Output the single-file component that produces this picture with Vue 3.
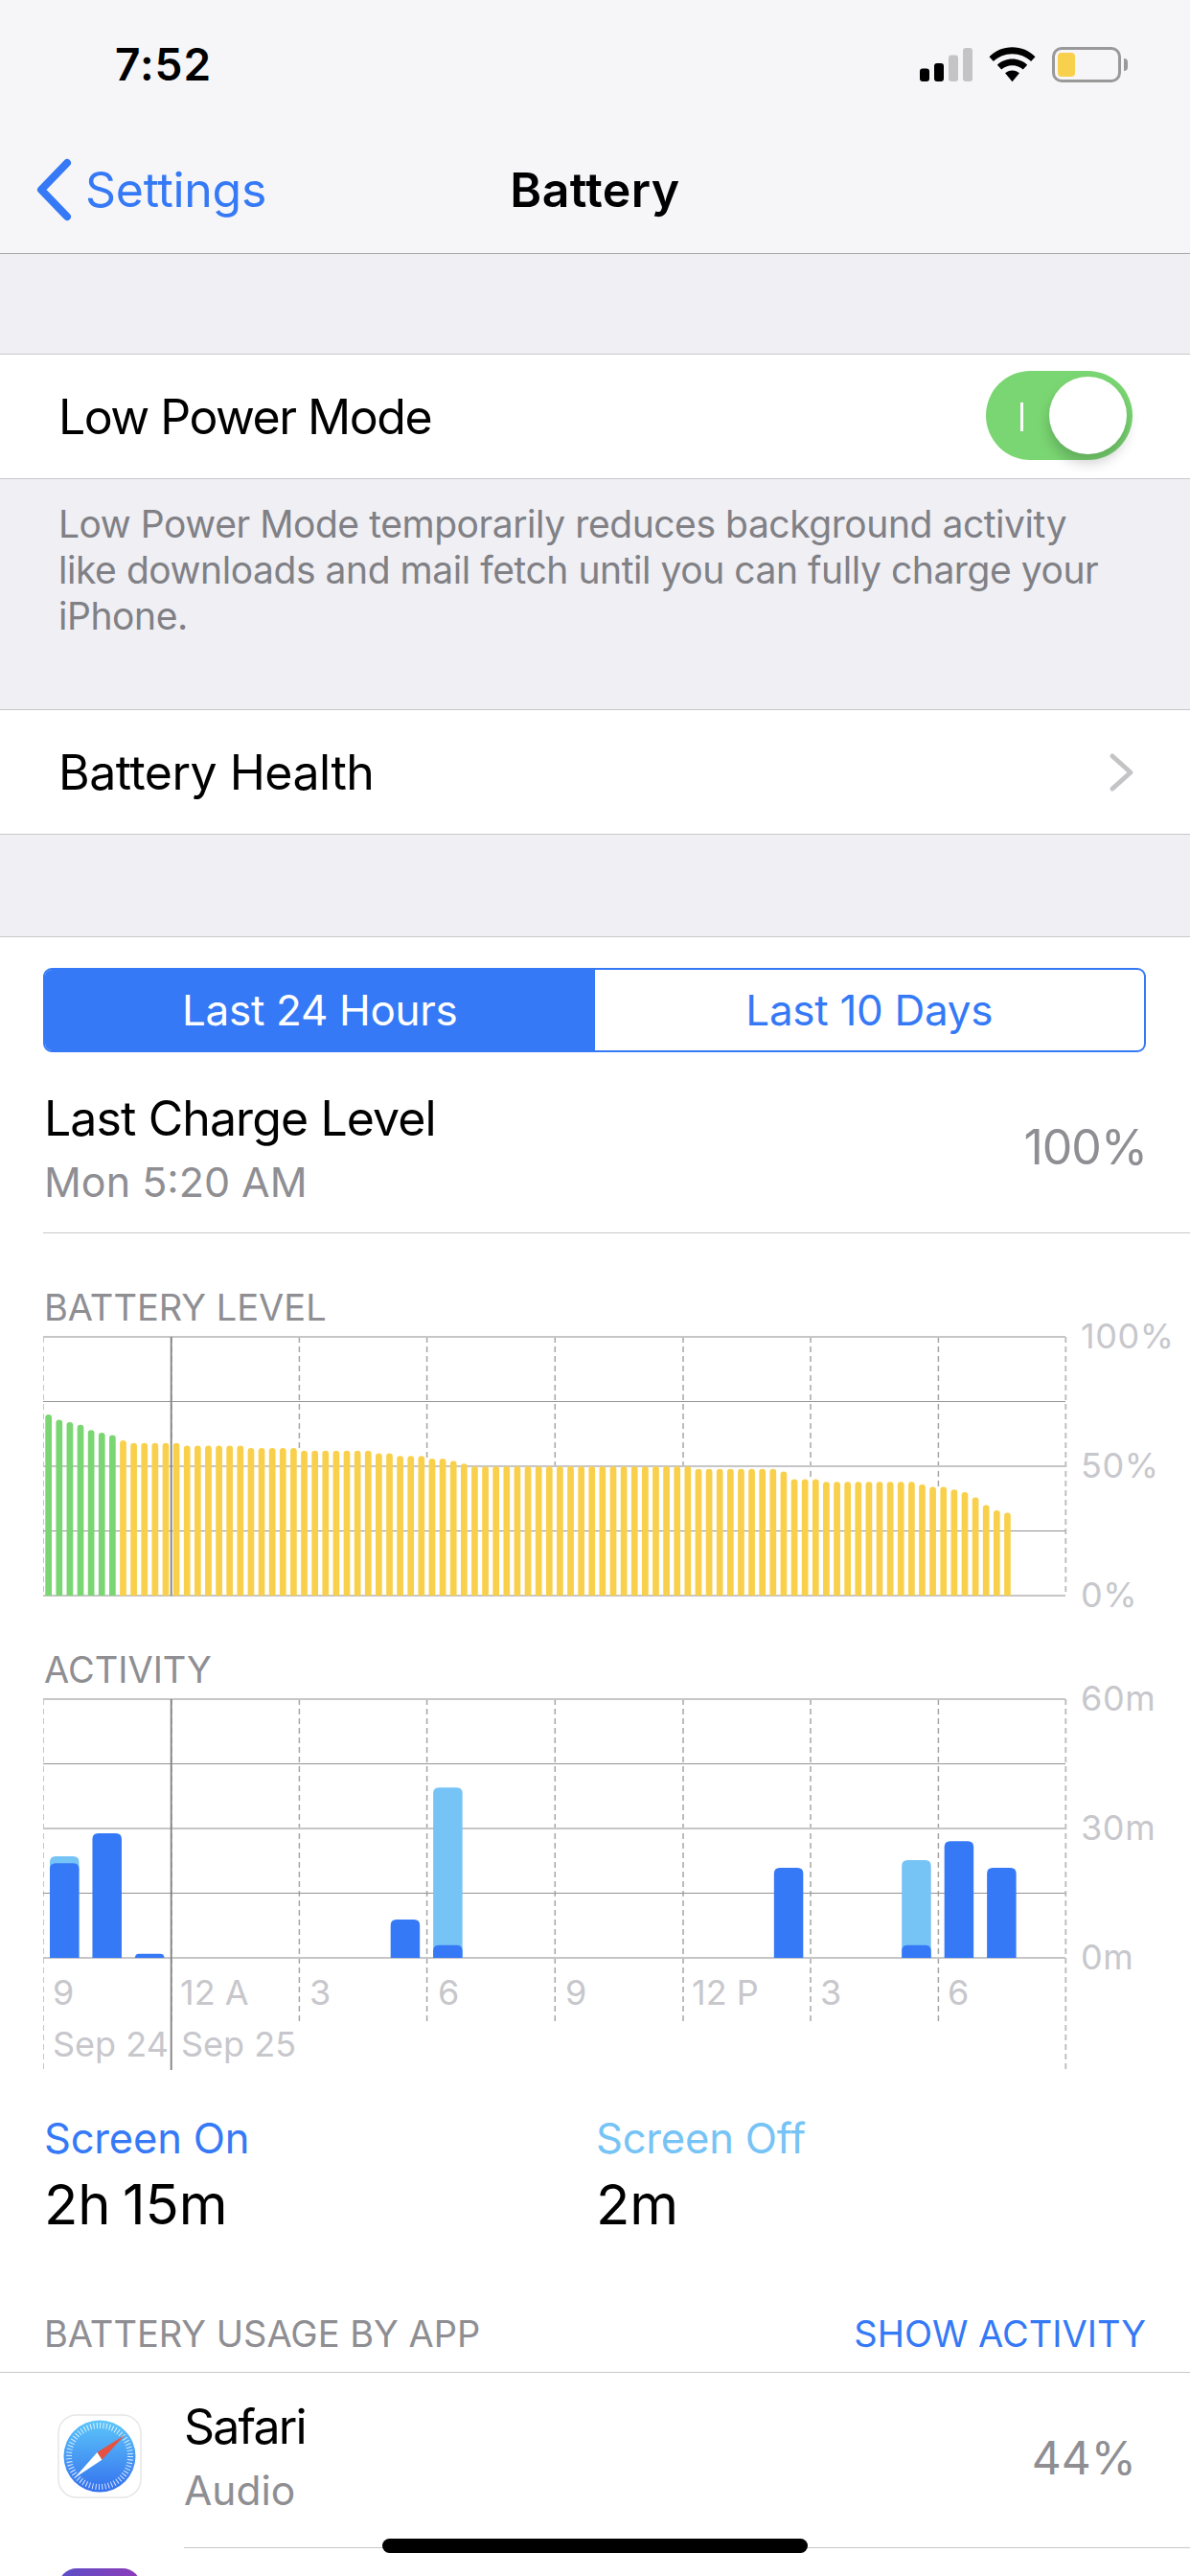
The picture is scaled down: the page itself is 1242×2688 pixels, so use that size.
<template>
  <div class="phone">
    <header class="top">
      <div class="status">
        <span class="time">7:52</span>
        <div class="status-icons">
          <svg class="signal" width="55" height="35" viewBox="0 0 55 35">
            <rect x="0" y="21.500" width="10" height="13.500" rx="3" fill="#000" />
            <rect x="15" y="16" width="10" height="19" rx="3" fill="#000" />
            <rect x="30" y="7.500" width="10" height="27.500" rx="3" fill="#c4c4c4" />
            <rect x="45" y="0" width="10" height="35" rx="3" fill="#c4c4c4" />
          </svg>
          <svg class="wifi" width="49" height="37" viewBox="0 0 50 37">
            <path d="M25 0C15.500 0 7 3.800 0.500 10L5 15C10.300 10 17.300 7 25 7S39.700 10 45 15L49.500 10C43 3.800 34.500 0 25 0Z" fill="#000" />
            <path d="M25 12.500C18.800 12.500 13.200 14.900 9 18.800L13.500 23.700C16.500 20.900 20.500 19.200 25 19.200S33.500 20.900 36.500 23.700L41 18.800C36.800 14.900 31.200 12.500 25 12.500Z" fill="#000" />
            <path d="M25 24.500C22 24.500 19.400 25.600 17.400 27.400L25 36.500L32.600 27.400C30.600 25.600 28 24.500 25 24.500Z" fill="#000" />
          </svg>
          <div class="battery">
            <div class="battery-body"><div class="battery-fill"></div></div>
            <div class="battery-nub"></div>
          </div>
        </div>
      </div>
      <nav class="nav">
        <a class="back">
          <svg width="38" height="66" viewBox="0 0 38 66">
            <path d="M33 5L6 33L33 61" fill="none" stroke="#3579f6" stroke-width="8" stroke-linecap="round" stroke-linejoin="round" />
          </svg>
          <span>Settings</span>
        </a>
        <h1>Battery</h1>
      </nav>
    </header>

    <div class="gap gap-first"></div>
    <div class="row row-switch">
      <span class="low-power">Low Power Mode</span>
      <div class="switch">
        <i class="switch-mark"></i>
        <i class="switch-knob"></i>
      </div>
    </div>
    <p class="note">Low Power Mode temporarily reduces background activity like downloads and mail fetch until you can fully charge your iPhone.</p>
    <div class="row">
      <span class="health">Battery Health</span>
      <svg width="28" height="42" viewBox="0 0 28 42">
        <path d="M4 4L23 21L4 38" fill="none" stroke="#c4c4c7" stroke-width="5" stroke-linecap="round" stroke-linejoin="round" />
      </svg>
    </div>
    <div class="gap gap-second"></div>

    <section class="usage">
      <div class="segment">
        <div class="segment-item active">Last 24 Hours</div>
        <div class="segment-item">Last 10 Days</div>
      </div>

      <div class="charge">
        <div>
          <div class="charge-title">Last Charge Level</div>
          <div class="charge-sub">Mon 5:20 AM</div>
        </div>
        <div class="charge-value">100%</div>
      </div>

      <div class="chart-title title-level">BATTERY LEVEL</div>
      <svg class="chart" width="1242" height="296" viewBox="0 0 1242 296">
        <line v-for="t in levelTicks" :key="t.x" :x1="t.x" :x2="t.x" y1="6" :y2="t.end" :class="t.cls" />
        <line v-for="g in grid" :key="g.y" x1="45" x2="1112" :y1="g.y" :y2="g.y" :class="g.cls" />
        <path v-for="b in levelBars" :key="b.d" :d="b.d" :fill="b.fill" />
        <line x1="178.700" x2="178.700" y1="6" y2="276" class="day" />
        <text v-for="l in levelLabels" :key="l.t" x="1128" :y="l.y" class="axis axis-y">{{ l.t }}</text>
      </svg>

      <div class="chart-title title-activity">ACTIVITY</div>
      <svg class="chart" width="1242" height="400" viewBox="0 0 1242 400">
        <line v-for="t in activityTicks" :key="t.x" :x1="t.x" :x2="t.x" y1="6" :y2="t.end" :class="t.cls" />
        <line v-for="g in grid" :key="g.y" x1="45" x2="1112" :y1="g.y" :y2="g.y" :class="g.cls" />
        <path v-for="b in activityBars" :key="b.d" :d="b.d" :fill="b.fill" />
        <line x1="178.700" x2="178.700" y1="6" y2="393" class="day" />
        <text v-for="l in activityLabels" :key="l.t" x="1128" :y="l.y" class="axis axis-y">{{ l.t }}</text>
        <text v-for="l in hourLabels" :key="l.x" :x="l.x" y="325" class="axis">{{ l.t }}</text>
        <text x="55" y="379" class="axis">Sep 24</text>
        <text x="189" y="379" class="axis">Sep 25</text>
      </svg>

      <div class="totals">
        <div class="total">
          <div class="total-label on">Screen On</div>
          <div class="total-value">2h 15m</div>
        </div>
        <div class="total">
          <div class="total-label off">Screen Off</div>
          <div class="total-value">2m</div>
        </div>
      </div>

      <div class="apps-head">
        <span>BATTERY USAGE BY APP</span>
        <a>SHOW ACTIVITY</a>
      </div>

      <div class="app">
        <svg class="app-icon" width="88" height="88" viewBox="0 0 88 88">
          <defs>
            <linearGradient id="safari" x1="0" y1="0" x2="0" y2="1">
              <stop offset="0" stop-color="#5cc6f9" />
              <stop offset="1" stop-color="#3470ee" />
            </linearGradient>
          </defs>
          <rect x="1" y="1" width="86" height="86" rx="19" fill="#fff" stroke="#e6e6e8" stroke-width="1.500" />
          <circle cx="44" cy="44" r="37.500" fill="url(#safari)" />
          <circle cx="44" cy="44" r="32" fill="none" stroke="#fff" stroke-width="6" stroke-dasharray="1 2.350" opacity="0.800" />
          <path d="M70.400 21.700L41.400 40L46.400 47.700Z" fill="#e8513f" />
          <path d="M17.700 66.700L41.400 40L46.400 47.700Z" fill="#fff" />
        </svg>
        <div class="app-body">
          <div class="app-text">
            <div class="app-name">Safari</div>
            <div class="app-sub">Audio</div>
          </div>
          <div class="app-value">44%</div>
        </div>
      </div>

      <div class="app-next"></div>
    </section>

    <div class="home"></div>
  </div>
</template>

<script setup>
const ticks = [45.5, 178.7, 312.4, 445.6, 579.3, 713, 846, 979.4, 1112.3]

// y = 6 is the top of the plot, each band is 67.5px
const grid = [
  { y: 6, cls: 'major' },
  { y: 73.5, cls: 'minor' },
  { y: 141, cls: 'major' },
  { y: 208.5, cls: 'minor' },
  { y: 276, cls: 'major' }
]

const levelLabels = [
  { t: '100%', y: 18 },
  { t: '50%', y: 153 },
  { t: '0%', y: 288 }
]
const activityLabels = [
  { t: '60m', y: 18 },
  { t: '30m', y: 153 },
  { t: '0m', y: 288 }
]
const hourLabels = [
  { t: '9', x: 55 },
  { t: '12 A', x: 188 },
  { t: '3', x: 323 },
  { t: '6', x: 457 },
  { t: '9', x: 590 },
  { t: '12 P', x: 722 },
  { t: '3', x: 856 },
  { t: '6', x: 989 }
]

const topRounded = (x, y, w, h, r) => {
  const c = Math.min(r, h)
  return `M${x} ${y + h}V${y + c}Q${x} ${y} ${x + c} ${y}H${x + w - c}Q${x + w} ${y} ${x + w} ${y + c}V${y + h}Z`
}

// [level in percent, how many bars in a row]
const levelRuns = [
  [70, 1], [68, 1], [67, 1], [66, 1], [64, 1], [63, 1], [62, 1], [60, 1], [59, 5],
  [58, 6], [57, 5], [56, 7], [55, 2], [54, 3], [53, 2], [52, 1], [51, 1], [50, 21],
  [49, 8], [48, 1], [45, 3], [44, 9], [43, 1], [42, 2], [41, 1], [40, 1], [38, 1],
  [35, 1], [33, 1], [32, 1]
]

const levels = levelRuns.flatMap(([v, n]) => Array(n).fill(v))

const levelBars = levels.map((v, i) => {
  const h = v * 2.7
  return {
    d: topRounded(47.3 + i * 11.12, 276 - h, 6.7, h, 3.3),
    fill: i < 7 ? '#7ad672' : '#f9d04b'
  }
})

const tickClass = (i) => {
  if (i === 0) return 'dash edge-left'
  if (i === ticks.length - 1) return 'dash edge-right'
  return 'dash'
}

// the dashes of the level chart stop where they reach the bars
const levelTicks = ticks.map((x, i) => {
  const level = levels[Math.round((x - 50.6) / 11.12)]
  const inner = i > 0 && level
  return { x, cls: tickClass(i), end: inner ? 276 - level * 2.7 : 276 }
})

// first and last run on past the hour labels, next to the dates
const activityTicks = ticks.map((x, i) => ({
  x,
  cls: tickClass(i),
  end: i === 0 || i === ticks.length - 1 ? 393 : 344
}))

// slot index, light height (screen off), dark height (screen on)
const activity = [
  [0, 106, 98.7],
  [1, 0, 130],
  [2, 0, 4.3],
  [8, 0, 40],
  [9, 177.7, 13.3],
  [17, 0, 94],
  [20, 102, 13.3],
  [21, 0, 121.7],
  [22, 0, 94]
]

const activityBars = activity.flatMap(([slot, light, dark]) => {
  const x = 52 + slot * 44.46
  const bars = []
  if (light) bars.push({ d: topRounded(x, 276 - light, 30.5, light, 6), fill: '#76c3f6' })
  bars.push({ d: topRounded(x, 276 - dark, 30.5, dark, 6), fill: '#3579f6' })
  return bars
})
</script>

<style>
html,
body {
  margin: 0;
  background: #fff;
  height: 2688px;
  overflow: hidden;
}
</style>

<style scoped>
.phone {
  position: relative;
  width: 1242px;
  height: 2688px;
  overflow: hidden;
  background: #efeff4;
  font-family: Inter, Roboto, "Liberation Sans", sans-serif;
  color: #000;
}

.top {
  height: 265px;
  box-sizing: border-box;
  background: #f6f6f8;
  border-bottom: 1.5px solid #a9a9ab;
}

.status {
  height: 132px;
  display: flex;
  justify-content: space-between;
  padding: 49px 65px 0 120px;
  box-sizing: border-box;
}

.time {
  font-size: 46px;
  font-weight: 600;
  line-height: 36px;
  letter-spacing: 1px;
}

.status-icons {
  display: flex;
  gap: 17px;
  align-items: flex-start;
}

.signal {
  margin-top: 1px;
}

.battery {
  display: flex;
  align-items: center;
  gap: 3px;
}

.battery-body {
  width: 72px;
  height: 37px;
  box-sizing: border-box;
  border: 3px solid #999;
  border-radius: 10px;
  padding: 3px;
}

.battery-fill {
  width: 18px;
  height: 25px;
  background: #f9d04b;
  border-radius: 4px;
}

.battery-nub {
  width: 4px;
  height: 13px;
  background: #999;
  border-radius: 0 5px 5px 0;
}

.nav {
  position: relative;
  height: 132px;
  display: flex;
  align-items: center;
  justify-content: center;
}

.back {
  position: absolute;
  left: 37px;
  top: 4px;
  display: flex;
  align-items: center;
  gap: 14px;
  color: #3579f6;
  font-size: 50px;
  letter-spacing: -0.3px;
  height: 124px;
}

h1 {
  margin: 0;
  font-size: 50px;
  font-weight: 600;
  letter-spacing: 0.4px;
}

.gap-first {
  height: 104px;
}

.gap-second {
  height: 106px;
}

.row {
  height: 131px;
  box-sizing: border-box;
  background: #fff;
  border-top: 1.5px solid #c8c7cc;
  border-bottom: 1.5px solid #c8c7cc;
  display: flex;
  align-items: center;
  justify-content: space-between;
  padding: 0 57px 0 61px;
  font-size: 50px;
}

.row-switch {
  padding-right: 60px;
}

.low-power {
  letter-spacing: -1.5px;
}

.health {
  letter-spacing: -0.5px;
}

.switch {
  position: relative;
  width: 153px;
  height: 93px;
  margin-top: -2px;
  border-radius: 47px;
  background: #7ad672;
}

.switch-mark {
  position: absolute;
  left: 36px;
  top: 33px;
  width: 3px;
  height: 30px;
  background: #fff;
}

.switch-knob {
  position: absolute;
  right: 6px;
  top: 6px;
  width: 81px;
  height: 81px;
  border-radius: 50%;
  background: #fff;
  box-shadow: 0 9px 14px rgba(0, 0, 0, 0.2);
}

.note {
  margin: 0;
  height: 240px;
  box-sizing: border-box;
  padding: 23px 80px 0 61px;
  font-size: 39px;
  line-height: 48px;
  letter-spacing: -0.44px;
  color: #808085;
}

.usage {
  height: 1711px;
  background: #fff;
  border-top: 1.5px solid #c8c7cc;
  box-sizing: border-box;
  padding-top: 31.500px;
}

.segment {
  margin: 0 46px 0 45px;
  height: 88px;
  display: flex;
  border: 2px solid #3579f6;
  border-radius: 9px;
  overflow: hidden;
  box-sizing: border-box;
  font-size: 44px;
  letter-spacing: -0.3px;
  color: #3579f6;
}

.segment-item {
  flex: 1;
  display: flex;
  align-items: center;
  justify-content: center;
}

.segment-item.active {
  background: #3579f6;
  color: #fff;
}

.charge {
  box-sizing: border-box;
  margin-left: 45px;
  padding: 39px 45px 28px 1px;
  display: flex;
  justify-content: space-between;
  align-items: center;
  border-bottom: 1.5px solid #c8c7cc;
}

.charge-title {
  font-size: 50px;
  line-height: 60px;
  letter-spacing: -0.9px;
}

.charge-sub {
  margin-top: 11px;
  font-size: 43px;
  line-height: 50px;
  color: #8e8e93;
}

.charge-value {
  font-size: 50px;
  letter-spacing: -1px;
  color: #8e8e93;
}

.chart-title {
  margin-left: 46px;
  font-size: 38px;
  line-height: 40px;
  color: #8e8e93;
}

.title-level {
  margin-top: 57.500px;
  margin-bottom: 5px;
}

.title-activity {
  margin-top: 37px;
  margin-bottom: 5px;
}

.chart {
  display: block;
  overflow: visible;
}

.dash {
  stroke: #a6a6a8;
  stroke-width: 1.500;
  stroke-dasharray: 6 4;
}

.edge-left {
  stroke: #c6c6c8;
  stroke-width: 1;
}

.edge-right {
  stroke: #c0c0c2;
  stroke-width: 2;
}

.major {
  stroke: #c6c6c8;
  stroke-width: 2;
}

.minor {
  stroke: #939395;
  stroke-width: 1.200;
}

.day {
  stroke: #808082;
  stroke-width: 1.800;
}

.axis {
  font-size: 36px;
  fill: #c7c7cc;
}

.axis-y {
  letter-spacing: 0.6px;
}

.totals {
  display: flex;
  padding: 39px 0 0 46px;
}

.total {
  width: 576px;
}

.total-label {
  font-size: 43.500px;
  line-height: 50px;
  letter-spacing: -0.2px;
}

.on {
  color: #3579f6;
}

.off {
  color: #76c3f6;
}

.total-value {
  margin-top: 11px;
  font-size: 58px;
  line-height: 66px;
  word-spacing: -4px;
}

.apps-head {
  margin-top: 80px;
  height: 62.500px;
  box-sizing: border-box;
  padding: 0 46px;
  display: flex;
  justify-content: space-between;
  font-size: 38px;
  line-height: 44px;
  color: #8e8e93;
  border-bottom: 1.5px solid #c8c7cc;
}

.apps-head a {
  color: #3579f6;
}

.app {
  height: 183px;
  box-sizing: border-box;
  display: flex;
  align-items: center;
  padding-left: 60px;
}

.app-icon {
  flex: none;
  margin-bottom: 8px;
}

.app-body {
  flex: 1;
  margin-left: 44px;
  height: 100%;
  display: flex;
  justify-content: space-between;
  align-items: center;
  padding-right: 56px;
  border-bottom: 1.5px solid #c8c7cc;
}

.app-text {
  padding-bottom: 7px;
}

.app-name {
  font-size: 50px;
  line-height: 60px;
  letter-spacing: -1.8px;
}

.app-sub {
  margin-top: 12px;
  font-size: 42.500px;
  line-height: 50px;
  color: #8e8e93;
}

.app-value {
  padding-bottom: 4px;
  font-size: 48px;
  color: #8e8e93;
}

.app-next {
  margin: 21px 0 0 61px;
  width: 86px;
  height: 86px;
  border-radius: 19px;
  background: linear-gradient(90deg, #5b4fc8, #8f3bb8);
}

.home {
  position: absolute;
  left: 399px;
  top: 2649px;
  width: 444px;
  height: 15px;
  border-radius: 8px;
  background: #000;
}
</style>
